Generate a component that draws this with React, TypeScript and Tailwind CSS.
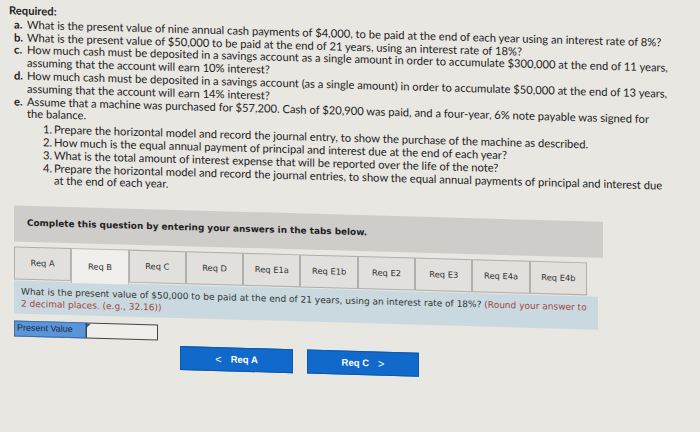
import React from "react";

const tabs = ["Req A", "Req B", "Req C", "Req D", "Req E1a", "Req E1b", "Req E2", "Req E3", "Req E4a", "Req E4b"];

function Item({ label, children }: { label: string; children: React.ReactNode }) {
  return (
    <div className="flex">
      <span className="w-[13px] shrink-0 font-bold">{label}</span>
      <div>{children}</div>
    </div>
  );
}

function Sub({ label, children }: { label: string; children: React.ReactNode }) {
  return (
    <div className="flex">
      <span className="w-[11px] shrink-0">{label}</span>
      <div>{children}</div>
    </div>
  );
}

export default function App() {
  return (
    <div className="w-[700px] h-[432px] overflow-hidden bg-[#e9e7e2]">
      <div className="origin-top-left skew-y-[1.6deg]">
        <div
          className="pl-[9px] pt-[4px] text-[11.2px] leading-[12.8px] text-[#222]"
          style={{ fontFamily: "Lato, 'Open Sans', sans-serif" }}
        >
          <div className="font-bold mb-[1px]">Required:</div>
          <div className="pl-[5px]">
            <Item label="a.">
              What is the present value of nine annual cash payments of $4,000, to be paid at the end of each year using an interest rate of 8%?
            </Item>
            <Item label="b.">
              What is the present value of $50,000 to be paid at the end of 21 years, using an interest rate of 18%?
            </Item>
            <Item label="c.">
              How much cash must be deposited in a savings account as a single amount in order to accumulate $300,000 at the end of 11 years,
              <br />
              assuming that the account will earn 10% interest?
            </Item>
            <Item label="d.">
              How much cash must be deposited in a savings account (as a single amount) in order to accumulate $50,000 at the end of 13 years,
              <br />
              assuming that the account will earn 14% interest?
            </Item>
            <Item label="e.">
              Assume that a machine was purchased for $57,200. Cash of $20,900 was paid, and a four-year, 6% note payable was signed for
              <br />
              the balance.
              <div className="mt-[2px] pl-[16px]">
                <Sub label="1.">Prepare the horizontal model and record the journal entry, to show the purchase of the machine as described.</Sub>
                <Sub label="2.">How much is the equal annual payment of principal and interest due at the end of each year?</Sub>
                <Sub label="3.">What is the total amount of interest expense that will be reported over the life of the note?</Sub>
                <Sub label="4.">
                  Prepare the horizontal model and record the journal entries, to show the equal annual payments of principal and interest due
                  <br />
                  at the end of each year.
                </Sub>
              </div>
            </Item>
          </div>
        </div>

        <div className="ml-[14px] mt-[19px] w-[589px]" style={{ fontFamily: "'DejaVu Sans', Verdana, sans-serif" }}>
          <div className="h-[36px] bg-[#cfcdc9] pl-[13px] flex items-center text-[8.9px] font-bold text-[#222]">
            Complete this question by entering your answers in the tabs below.
          </div>
          <div className="mt-[5px] w-[573px] grid grid-cols-10">
            {tabs.map((t) => (
              <div
                key={t}
                className={
                  t === "Req B"
                    ? "h-[35px] bg-[#f0efec] border border-b-0 border-[#b8b7b3] flex items-center justify-center text-[8.3px] text-[#333]"
                    : "h-[33px] bg-[#e1e0dc] border border-[#b0afab] flex items-center justify-center text-[8.3px] text-[#333]"
                }
              >
                {t}
              </div>
            ))}
          </div>
          <div className="-mt-[1px] w-[584px] h-[33px] bg-[#c9d9df] pl-[7px] pt-[5px] text-[9px] leading-[12px] text-[#333]">
            What is the present value of $50,000 to be paid at the end of 21 years, using an interest rate of 18%?{" "}
            <span className="text-[#a0463e]">
              (Round your answer to
              <br />2 decimal places. (e.g., 32.16))
            </span>
          </div>
          <div className="mt-[7px] flex h-[16px]" style={{ fontFamily: "'Liberation Sans', Arial, sans-serif" }}>
            <div className="w-[72px] bg-[#5b95d9] border border-[#3f6fa6] text-[9px] text-[#1c2a40] pl-[2px] flex items-center">
              Present Value
            </div>
            <div className="relative w-[72px] bg-[#efeeeb] border border-[#444]">
              <div className="absolute left-0 top-0 w-0 h-0 border-t-[4px] border-t-[#2d5fa0] border-r-[4px] border-r-transparent" />
            </div>
          </div>
          <div className="mt-[5px] ml-[166px] flex gap-[14px]" style={{ fontFamily: "'Liberation Sans', Arial, sans-serif" }}>
            <div className="w-[113px] h-[24px] bg-[#1169cc] border border-[#0b58ad] flex items-center justify-center gap-[9px] text-white text-[9.5px] font-bold">
              <span className="text-[11px] font-normal">&lt;</span>
              <span>Req A</span>
            </div>
            <div className="w-[112px] h-[24px] bg-[#1169cc] border border-[#0b58ad] flex items-center justify-center gap-[9px] text-white text-[9.5px] font-bold">
              <span>Req C</span>
              <span className="text-[11px] font-normal">&gt;</span>
            </div>
          </div>
        </div>
      </div>
    </div>
  );
}
